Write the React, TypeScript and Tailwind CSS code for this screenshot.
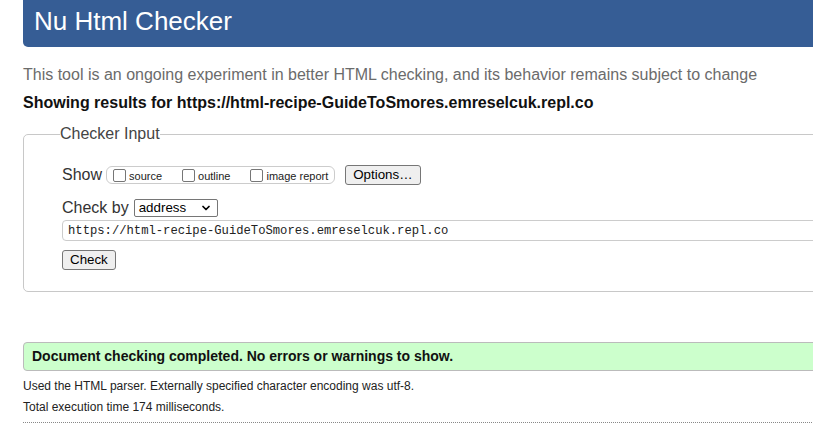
import { ChevronDown } from 'lucide-react';

const SHOW_OPTIONS = ['source', 'outline', 'image report'];

function Box() {
  return <span className="inline-block w-[13px] h-[13px] border border-[#767676] rounded-[2px] bg-white shrink-0" />;
}

export default function App() {
  return (
    <div className="w-[813px] h-[436px] overflow-hidden bg-white font-['Liberation_Sans',Arial,sans-serif]">
      <div className="w-[900px] pl-[23px]">
        {/* Header */}
        <div className="h-[47px] bg-[#365d95] rounded-bl-[5px] pl-[11px] pt-[6px]">
          <h1 className="text-[26px] leading-[30px] text-white font-normal">Nu Html Checker</h1>
        </div>

        <p className="mt-[18px] text-[16px] leading-[20px] text-[#6b6b6b]">
          This tool is an ongoing experiment in better HTML checking, and its behavior remains subject to change
        </p>
        <p className="mt-[8px] text-[16px] leading-[20px] font-bold text-[#111]">
          Showing results for https://html-recipe-GuideToSmores.emreselcuk.repl.co
        </p>

        {/* Checker input */}
        <fieldset className="mt-[11px] border border-[#c8c8c8] rounded-[5px] pl-[38px] pb-[20px]">
          <legend className="-ml-[2px] text-[16px] leading-[20px] text-[#444]">Checker Input</legend>

          <div className="mt-[21px] flex items-center h-[20px]">
            <span className="text-[16px] leading-[20px] text-[#333]">Show</span>
            <div className="ml-[4px] h-[18px] flex items-center border border-[#ccc] rounded-[6px] pl-[6px] pr-[6px] gap-[20px]">
              {SHOW_OPTIONS.map((o) => (
                <label key={o} className="flex items-center gap-[3px] text-[11px] leading-[14px] text-[#222]">
                  <Box />
                  <span className="pt-[2px]">{o}</span>
                </label>
              ))}
            </div>
            <button type="button" className="ml-[10px] h-[20px] px-[7px] bg-[#efefef] border border-[#767676] rounded-[3px] text-[13.33px] leading-[18px] text-black">
              Options…
            </button>
          </div>

          <div className="mt-[13px] flex items-center h-[20px]">
            <span className="text-[16px] leading-[20px] text-[#333]">Check by</span>
            <div className="ml-[5px] w-[84px] h-[18px] flex items-center justify-between border border-[#767676] rounded-[2px] pl-[4px] pr-[5px] text-[13.33px] text-black">
              <span>address</span>
              <ChevronDown size={12} strokeWidth={3.5} className="text-black" />
            </div>
          </div>

          <div className="mt-[2px] h-[21px] flex items-center border border-[#ccc] rounded-[4px] pl-[5px] pt-[2px] font-['Liberation_Mono',monospace] text-[12.2px] text-[#222]">
            https://html-recipe-GuideToSmores.emreselcuk.repl.co
          </div>

          <button type="button" className="mt-[9px] h-[20px] px-[7px] bg-[#efefef] border border-[#767676] rounded-[3px] text-[13.33px] leading-[18px] text-black">
            Check
          </button>
        </fieldset>

        {/* Result */}
        <div className="mt-[50px] h-[29px] flex items-center bg-[#ccffcc] border border-[#bbb] rounded-l-[4px] pl-[8px]">
          <p className="text-[14px] leading-[27px] font-bold text-[#111]">
            Document checking completed. No errors or warnings to show.
          </p>
        </div>
        <p className="mt-[5px] text-[12px] leading-[21px] text-[#222]">
          Used the HTML parser. Externally specified character encoding was utf-8.
        </p>
        <p className="text-[12px] leading-[21px] text-[#222]">Total execution time 174 milliseconds.</p>
        <div className="mt-[4px] border-t border-dotted border-[#888]" />
      </div>
    </div>
  );
}
